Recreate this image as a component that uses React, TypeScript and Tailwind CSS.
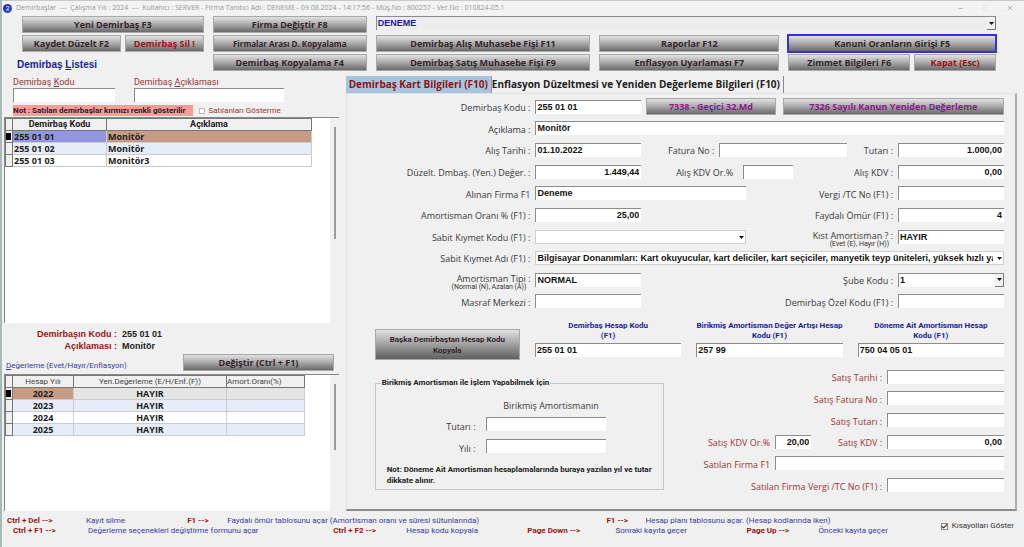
import React from "react"
import { Check, Minus, Square, X } from "lucide-react"
import clsx from "clsx"

const fieldBase =
  "block w-full h-[14px] min-w-0 bg-white border-0 border-t border-l border-[#8c8c8c] rounded-none pl-[1px] pb-[1px] font-['Liberation_Sans',sans-serif] font-bold text-[9px] leading-[12px] text-[#111] outline-none"

type FieldProps = {
  id: string
  value?: string
  right?: boolean
  label?: string
  className?: string
}

const Field: React.FC<FieldProps> = ({ id, value = "", right, label, className }) => (
  <input
    id={id}
    type="text"
    defaultValue={value}
    aria-label={label}
    className={clsx(fieldBase, "pr-[2px]", right && "text-right", className)}
  />
)

const Arrow: React.FC<{ boxed?: boolean }> = ({ boxed }) => (
  <span
    className={clsx(
      "pointer-events-none absolute right-0 top-[1px] bottom-0 flex w-[9px] items-center justify-center",
      boxed && "bg-[#f0f0f0] border-r border-b border-[#777]"
    )}
  >
    <svg width="5" height="3" viewBox="0 0 5 3">
      <path d="M0 0h5L2.5 3z" fill="#111" />
    </svg>
  </span>
)

type SelectProps = FieldProps & { flat?: boolean; boxed?: boolean }

const SelectField: React.FC<SelectProps> = ({ id, value = "", label, flat, boxed, className }) => (
  <div className={clsx("relative min-w-0", className)}>
    <select
      id={id}
      aria-label={label}
      defaultValue={value}
      className={clsx(
        fieldBase,
        "appearance-none pr-[10px]",
        flat && "border-r border-b border-[#d0d0d0]!"
      )}
    >
      <option value={value}>{value}</option>
    </select>
    <Arrow boxed={boxed} />
  </div>
)

type LabelProps = { htmlFor: string; children: React.ReactNode; sub?: string; red?: boolean; className?: string }

const Label: React.FC<LabelProps> = ({ htmlFor, children, sub, red, className }) => (
  <label
    htmlFor={htmlFor}
    className={clsx(
      "block text-right font-['Open_Sans',sans-serif] text-[9px] whitespace-nowrap",
      sub ? "pt-[5px] leading-[9px]" : "pt-[3px] leading-[14px]",
      red ? "text-[#9b3535]" : "text-[#3a3a3a]",
      className
    )}
  >
    {children}
    {sub && <span className="block pr-[4px] font-[Roboto,sans-serif] text-[7px] leading-[8px] text-[#333]">{sub}</span>}
  </label>
)

type ButtonProps = { children: React.ReactNode; className?: string }

const Button: React.FC<ButtonProps> = ({ children, className }) => (
  <button
    type="button"
    className={clsx(
      "h-[17px] min-w-0 border border-[#a8a8a8] bg-linear-to-b from-[#e2e2e2] via-[#a9a9a9] to-[#6a6a6a] px-[2px] font-['Open_Sans',sans-serif] leading-[12px] font-bold whitespace-nowrap",
      className || "text-[#33262b] text-[9px]"
    )}
  >
    {children}
  </button>
)

const FormRow: React.FC<{ children: React.ReactNode }> = ({ children }) => (
  <div className="grid grid-cols-[184fr_106fr_247fr_106fr] items-center gap-x-[5px]">{children}</div>
)

const Scrollbar: React.FC<{ className: string }> = ({ className }) => (
  <div className="w-[9px] bg-[#f0f0f0] pl-[4px] pt-[9px]">
    <div className={clsx("w-[2px] bg-[#9a9a9a]", className)} />
  </div>
)

const Marker: React.FC<{ active?: boolean }> = ({ active }) => (
  <td className="border border-[#777] bg-[#f0f0f0] p-0">
    {active && <div className="h-[7px] w-[5px] bg-black" />}
  </td>
)

const assets = [
  { code: "255 01 01", name: "Monitör" },
  { code: "255 01 02", name: "Monitör" },
  { code: "255 01 03", name: "Monitör3" },
]

const years = ["2022", "2023", "2024", "2025"]

const accounts = [
  { id: "hesap", title: "Demirbaş Hesap Kodu", end: "(F1)", value: "255 01 01" },
  { id: "artis", title: "Birikmiş Amortisman Değer Artışı Hesap", end: "Kodu (F1)", value: "257 99" },
  { id: "donem", title: "Döneme Ait Amortisman Hesap", end: "Kodu (F1)", value: "750 04 05 01" },
]

const TitleBar: React.FC = () => (
  <header className="flex h-[15px] items-center border-t border-[#c3cbcb] bg-[#f3f3f3] pl-[1px] pr-[10px] text-[#999]">
    <svg width="9" height="9" viewBox="0 0 18 18">
      <defs>
        <linearGradient id="logo" x1="0" y1="0" x2="1" y2="1">
          <stop offset="0" stopColor="#1a2a80" />
          <stop offset="1" stopColor="#3050f0" />
        </linearGradient>
      </defs>
      <circle cx="9" cy="9" r="9" fill="url(#logo)" />
      <path d="M6 6.500c2-3 7-2 5.500 1L7 12h5" fill="none" stroke="#dfe6ff" strokeWidth="2" />
    </svg>
    <h1 className="ml-[4px] flex-1 font-['Open_Sans',sans-serif] text-[7px] whitespace-pre">
      Demirbaşlar  ---  Çalışma Yılı : 2024  ---  Kullanıcı : SERVER - Firma Tanıtıcı Adı : DENEME - 09.08.2024 - 14:17:56 - Müş.No : 800257 - Ver.No : 010824-05.1
    </h1>
    <div className="flex gap-[18px]">
      <button type="button" aria-label="Simge durumuna küçült"><Minus size={7} /></button>
      <button type="button" aria-label="Ekranı kapla" className="text-[#ddd]"><Square size={6} /></button>
      <button type="button" aria-label="Pencereyi kapat"><X size={8} /></button>
    </div>
  </header>
)

const Toolbar: React.FC = () => (
  <div className="grid grid-cols-[182fr_154fr_215fr_180fr_208fr] gap-x-[9px] gap-y-[2px] pl-[20px] pr-[28px] pt-[1px]">
    <Button>Yeni Demirbaş F3</Button>
    <Button>Firma Değiştir F8</Button>
    <div className="relative col-span-3">
      <select
        aria-label="Firma"
        defaultValue="DENEME"
        className="block h-[14px] w-full appearance-none border-t border-l border-[#8c8c8c] bg-[#ededed] pb-[1px] pl-[1px] font-['Liberation_Sans',sans-serif] text-[9px] leading-[12px] font-bold text-[#1c1c96]"
      >
        <option>DENEME</option>
      </select>
      <span className="pointer-events-none absolute right-0 top-0 h-[14px] w-[9px]">
        <Arrow boxed />
      </span>
    </div>

    <div className="grid grid-cols-[99fr_79fr] gap-x-[4px]">
      <Button>Kaydet Düzelt F2</Button>
      <Button className="text-[#9b1414] text-[9px]">Demirbaş Sil !</Button>
    </div>
    <Button className="text-[#33262b] text-[8px]">Firmalar Arası D. Kopyalama</Button>
    <Button>Demirbaş Alış Muhasebe Fişi F11</Button>
    <Button>Raporlar F12</Button>
    <Button className="text-[#33262b] text-[9px] outline-2 -outline-offset-1 outline-[#3a2fe0]">Kanuni Oranların Girişi F5</Button>

    <h2 className="-ml-[5px] self-center pt-[4px] font-['Liberation_Sans',sans-serif] text-[10px] leading-[12px] font-bold text-[#1c1c96]">
      Demirbaş <u>L</u>istesi
    </h2>
    <Button>Demirbaş Kopyalama F4</Button>
    <Button>Demirbaş Satış Muhasebe Fişi F9</Button>
    <Button>Enflasyon Uyarlaması F7</Button>
    <div className="grid grid-cols-[122fr_82fr] gap-x-[4px]">
      <Button>Zimmet Bilgileri F6</Button>
      <Button className="text-[#9b1414] text-[9px]">Kapat (Esc)</Button>
    </div>
  </div>
)

const ListPanel: React.FC = () => (
  <section className="flex flex-col">
    <div className="grid grid-cols-[102fr_150fr_36fr] gap-x-[19px] pl-[9px] text-[9px] leading-[12px] text-[#9b3535]">
      <div>
        <label htmlFor="araKod" className="block">Demirbaş <u>K</u>odu</label>
        <Field id="araKod" />
      </div>
      <div>
        <label htmlFor="araAciklama" className="block">Demirbaş <u>A</u>çıklaması</label>
        <Field id="araAciklama" />
      </div>
    </div>
    <div className="mt-[3px] mb-[1px] flex items-center gap-[6px] pl-[9px] text-[8px] leading-[11px] whitespace-nowrap">
      <p className="bg-[#ff9a9a] pr-[8px] font-bold text-[#222]">Not : Satılan demirbaşlar kırmızı renkli gösterilir</p>
      <label className="flex items-center gap-[3px] text-[#9b3535]">
        <input type="checkbox" className="size-[6px] appearance-none border border-[#bbb] bg-white" />
        Satılanları Gösterme
      </label>
    </div>

    <div className="flex min-h-[205px] flex-[205] border-t border-l border-[#888] bg-white">
      <div className="flex-1">
        <table className="w-[307px] table-fixed border-collapse text-[9px] leading-[11px] font-bold text-[#222]">
          <colgroup>
            <col className="w-[7px]" />
            <col className="w-[94px]" />
            <col />
          </colgroup>
          <thead>
            <tr className="h-[12px] bg-[#f0f0f0]">
              <th className="border border-[#777] p-0" />
              <th className="border border-[#777] p-0">Demirbaş Kodu</th>
              <th className="border border-[#777] p-0">Açıklama</th>
            </tr>
          </thead>
          <tbody className="font-['Open_Sans',sans-serif]">
            {assets.map((asset, i) => (
              <tr key={asset.code} className={clsx("h-[12px]", i === 1 && "bg-[#e6edf8]")}>
                <Marker active={i === 0} />
                <td className={clsx("border border-[#ccc] p-0 pl-[1px]", i === 0 && "bg-[#9297e2]")}>{asset.code}</td>
                <td className={clsx("border border-[#ccc] p-0 pl-[1px]", i === 0 && "bg-[#c69c84]")}>{asset.name}</td>
              </tr>
            ))}
          </tbody>
        </table>
      </div>
      <Scrollbar className="h-[112px]" />
    </div>

    <dl className="grid grid-cols-[113px_1fr] gap-x-[5px] pt-[5px] font-['Liberation_Sans',sans-serif] text-[9px] leading-[12px] font-bold text-[#222]">
      <dt className="text-right text-[#9b1414]">Demirbaşın Kodu :</dt>
      <dd>255 01 01</dd>
      <dt className="text-right text-[#9b1414]">Açıklaması :</dt>
      <dd>Monitör</dd>
    </dl>
    <div className="mt-[2px] mb-[3px] grid grid-cols-[171fr_151fr] gap-x-[7px] pl-[2px] pr-[5px]">
      <h3 className="self-end text-[8px] leading-[11px] text-[#3a3a9e]"><u>D</u>eğerleme (Evet/Hayır/Enflasyon)</h3>
      <Button>Değiştir (Ctrl + F1)</Button>
    </div>

    <div className="flex min-h-[136px] flex-[136] border-t border-l border-[#888] bg-white">
      <div className="flex-1">
        <table className="w-[300px] table-fixed border-collapse text-center text-[9px] leading-[11px] font-bold text-[#222]">
          <colgroup>
            <col className="w-[7px]" />
            <col className="w-[61px]" />
            <col className="w-[153px]" />
            <col />
          </colgroup>
          <thead>
            <tr className="h-[12px] bg-[#f0f0f0] text-[8px] text-[#444]">
              <th className="border border-[#777] p-0" />
              <th className="border border-[#777] p-0 font-normal">Hesap Yılı</th>
              <th className="border border-[#777] p-0 font-normal">Yen.Değerleme (E/H/Enf.(F))</th>
              <th className="border border-[#777] p-0 text-left font-normal">Amort.Oranı(%)</th>
            </tr>
          </thead>
          <tbody className="font-['Open_Sans',sans-serif]">
            {years.map((year, i) => (
              <tr key={year} className={clsx("h-[12px]", i === 0 && "bg-[#e5e5e5]", i % 2 === 1 && "bg-[#e6edf8]")}>
                <Marker active={i === 0} />
                <td className={clsx("border border-[#ccc] p-0", i === 0 && "bg-[#c69c84]")}>{year}</td>
                <td className="border border-[#ccc] p-0">HAYIR</td>
                <td className="border border-[#ccc] p-0" />
              </tr>
            ))}
          </tbody>
        </table>
      </div>
      <Scrollbar className="h-[66px]" />
    </div>
  </section>
)

const AssetForm: React.FC = () => (
  <div className="grid h-[216px] auto-rows-fr">
    <FormRow>
      <Label htmlFor="kod">Demirbaş Kodu :</Label>
      <Field id="kod" value="255 01 01" />
      <div className="col-span-2 grid grid-cols-[129fr_221fr] gap-x-[7px]">
        <Button className="text-[#8a1a8a] text-[9px]">7338 - Geçici 32.Md</Button>
        <Button className="text-[#8a1a8a] text-[9px]">7326 Sayılı Kanun Yeniden Değerleme</Button>
      </div>
    </FormRow>
    <FormRow>
      <Label htmlFor="aciklama">Açıklama :</Label>
      <Field id="aciklama" value="Monitör" className="col-span-3" />
    </FormRow>
    <FormRow>
      <Label htmlFor="alisTarihi">Alış Tarihi :</Label>
      <Field id="alisTarihi" value="01.10.2022" />
      <div className="grid grid-cols-[68fr_128fr_41fr] items-center gap-x-[5px]">
        <Label htmlFor="faturaNo">Fatura No :</Label>
        <Field id="faturaNo" />
        <Label htmlFor="tutar">Tutarı :</Label>
      </div>
      <Field id="tutar" value="1.000,00" right />
    </FormRow>
    <FormRow>
      <Label htmlFor="deger">Düzelt. Dmbaş. (Yen.) Değer. :</Label>
      <Field id="deger" value="1.449,44" right />
      <div className="grid grid-cols-[87fr_50fr_90fr] items-center gap-x-[10px]">
        <Label htmlFor="kdvOran">Alış KDV Or.%</Label>
        <Field id="kdvOran" />
        <Label htmlFor="alisKdv">Alış KDV :</Label>
      </div>
      <Field id="alisKdv" value="0,00" right />
    </FormRow>
    <FormRow>
      <Label htmlFor="firma">Alınan Firma F1</Label>
      <div className="col-span-2 grid grid-cols-[211fr_142fr] items-center gap-x-[5px]">
        <Field id="firma" value="Deneme" />
        <Label htmlFor="vergi">Vergi /TC No (F1) :</Label>
      </div>
      <Field id="vergi" />
    </FormRow>
    <FormRow>
      <Label htmlFor="oran">Amortisman Oranı % (F1) :</Label>
      <Field id="oran" value="25,00" right />
      <Label htmlFor="omur">Faydalı Ömür (F1) :</Label>
      <Field id="omur" value="4" right />
    </FormRow>
    <FormRow>
      <Label htmlFor="kiymetKodu">Sabit Kıymet Kodu (F1) :</Label>
      <div className="col-span-2 grid grid-cols-[211fr_142fr] items-center gap-x-[5px]">
        <SelectField id="kiymetKodu" flat />
        <Label htmlFor="kist" sub="(Evet (E), Hayır (H))">Kıst Amortisman ? :</Label>
      </div>
      <Field id="kist" value="HAYIR" />
    </FormRow>
    <FormRow>
      <Label htmlFor="kiymetAdi">Sabit Kıymet Adı (F1) :</Label>
      <SelectField
        id="kiymetAdi"
        flat
        value="Bilgisayar Donanımları: Kart okuyucular, kart deliciler, kart seçiciler, manyetik teyp üniteleri, yüksek hızlı yazıcılar"
        className="col-span-3"
      />
    </FormRow>
    <FormRow>
      <Label htmlFor="tip" sub="(Normal (N), Azalan (A))">Amortisman Tipi :</Label>
      <Field id="tip" value="NORMAL" />
      <Label htmlFor="sube">Şube Kodu :</Label>
      <SelectField id="sube" value="1" boxed />
    </FormRow>
    <FormRow>
      <Label htmlFor="masraf">Masraf Merkezi :</Label>
      <Field id="masraf" />
      <Label htmlFor="ozelKod">Demirbaş Özel Kodu (F1) :</Label>
      <Field id="ozelKod" />
    </FormRow>
  </div>
)

const SalesForm: React.FC = () => {
  const row = "grid grid-cols-[106fr_36fr_66fr_117fr] items-center gap-x-[5px]"
  return (
    <div className="grid h-[130px] auto-rows-fr">
      <div className={row}>
        <Label red htmlFor="satisTarihi" className="col-span-3">Satış Tarihi :</Label>
        <Field id="satisTarihi" />
      </div>
      <div className={row}>
        <Label red htmlFor="satisFatura" className="col-span-3">Satış Fatura No :</Label>
        <Field id="satisFatura" />
      </div>
      <div className={row}>
        <Label red htmlFor="satisTutar" className="col-span-3">Satış Tutarı :</Label>
        <Field id="satisTutar" />
      </div>
      <div className={row}>
        <Label red htmlFor="satisOran">Satış KDV Or.%</Label>
        <Field id="satisOran" value="20,00" right />
        <Label red htmlFor="satisKdv">Satış KDV :</Label>
        <Field id="satisKdv" value="0,00" right />
      </div>
      <div className={row}>
        <Label red htmlFor="satilanFirma">Satılan Firma F1</Label>
        <Field id="satilanFirma" className="col-span-3" />
      </div>
      <div className={row}>
        <Label red htmlFor="satilanVergi" className="col-span-3">Satılan Firma Vergi /TC No (F1) :</Label>
        <Field id="satilanVergi" />
      </div>
    </div>
  )
}

const CardPanel: React.FC = () => (
  <section className="flex flex-col">
    <div role="tablist" className="flex h-[17px] items-stretch font-['Open_Sans',sans-serif] text-[10px] leading-[15px] font-bold whitespace-nowrap">
      <button type="button" role="tab" aria-selected="true" className="border-r border-[#999] bg-[#abc4de] px-[3px] text-[#8c1616]">
        Demirbaş Kart Bilgileri (F10)
      </button>
      <button type="button" role="tab" aria-selected="false" className="border-r border-[#888] pr-[3px] text-[#222]">
        Enflasyon Düzeltmesi ve Yeniden Değerleme Bilgileri (F10)
      </button>
    </div>
    <div className="flex-1 border-t border-l border-r-2 border-b-2 border-t-[#e2e2e2] border-l-[#e2e2e2] border-r-[#adadad] border-b-[#8c8c8c] pt-[2px] pr-[11px] pb-[13px]">
      <AssetForm />

      <div className="mt-[9px] grid grid-cols-[145fr_146fr_146fr_146fr] items-end gap-x-[15px] pl-[28px]">
        <button
          type="button"
          className="-mb-[3px] h-[31px] min-w-0 border border-[#a8a8a8] bg-linear-to-b from-[#e2e2e2] via-[#a0a0a0] to-[#606060] px-[10px] text-[8px] leading-[11px] font-bold text-[#33262b]"
        >
          Başka Demirbaştan Hesap Kodu Kopyala
        </button>
        {accounts.map((account) => (
          <div key={account.id} className="min-w-0">
            <label htmlFor={account.id} className="mb-[2px] flex flex-col items-center text-[8px] leading-[10px] font-bold whitespace-nowrap text-[#1c1c96]">
              <span>{account.title}</span>
              <span>{account.end}</span>
            </label>
            <Field id={account.id} value={account.value} />
          </div>
        ))}
      </div>

      <div className="mt-[9px] grid grid-cols-[290fr_340fr] pl-[28px]">
        <fieldset className="mt-[12px] mb-[6px] min-w-0 border border-[#c8c8c8] px-[5px]">
          <legend className="px-[1px] text-[8px] leading-[10px] font-bold text-[#222]">Birikmiş Amortisman ile İşlem Yapabilmek İçin</legend>
          <div className="grid grid-cols-[95fr_121fr_42fr] gap-x-[10px] gap-y-[8px]">
            <p className="col-start-2 mt-[11px] -mb-[4px] pl-[10px] text-center font-['Open_Sans',sans-serif] text-[9px] leading-[14px] whitespace-nowrap text-[#3a3a3a]">Birikmiş Amortismanın</p>
            <Label htmlFor="birikmisTutar" className="col-start-1 -mb-[3px]">Tutarı :</Label>
            <Field id="birikmisTutar" />
            <Label htmlFor="birikmisYil" className="col-start-1">Yılı :</Label>
            <Field id="birikmisYil" />
          </div>
          <p className="mt-[8px] px-[6px] text-[8px] leading-[11px] font-bold text-[#222]">
            Not: Döneme Ait Amortisman hesaplamalarında buraya yazılan yıl ve tutar dikkate alınır.
          </p>
        </fieldset>
        <SalesForm />
      </div>
    </div>
  </section>
)

const Key: React.FC<{ children: React.ReactNode }> = ({ children }) => <dt className="font-bold text-[#9b1414]">{children}</dt>

const Shortcuts: React.FC = () => (
  <footer className="flex items-center pt-[5px] pr-[10px] text-[8px] leading-[10px] whitespace-nowrap text-[#3a3a9e]">
    <div className="min-w-0 flex-1">
      <dl className="grid grid-cols-[79fr_101fr_40fr_379fr_39fr_295fr] pl-[5px]">
        <Key>Ctrl + Del --&gt;</Key>
        <dd>Kayıt silme</dd>
        <Key>F1 --&gt;</Key>
        <dd>Faydalı ömür tablosunu açar (Amortisman oranı ve süresi sütunlarında)</dd>
        <Key>F1 --&gt;</Key>
        <dd>Hesap planı tablosunu açar. (Hesap kodlarında iken)</dd>
      </dl>
      <dl className="grid grid-cols-[75fr_245fr_73fr_121fr_88fr_131fr_72fr_122fr] pl-[11px]">
        <Key>Ctrl + F1 --&gt;</Key>
        <dd>Değerleme seçenekleri değiştirme formunu açar</dd>
        <Key>Ctrl + F2 --&gt;</Key>
        <dd>Hesap kodu kopyala</dd>
        <Key>Page Down --&gt;</Key>
        <dd>Sonraki kayıta geçer</dd>
        <Key>Page Up --&gt;</Key>
        <dd>Önceki kayıta geçer</dd>
      </dl>
    </div>
    <label className="flex items-center gap-[4px] text-[#333]">
      <span className="relative flex size-[7px]">
        <input type="checkbox" defaultChecked className="size-[7px] appearance-none border border-[#888] bg-white" />
        <Check size={7} strokeWidth={4} className="pointer-events-none absolute inset-0" />
      </span>
      Kısayolları Göster
    </label>
  </footer>
)

const App: React.FC = () => {
  return (
    <div className="flex min-h-screen flex-col border-l-2 border-[#a9b8b8] bg-[#f0f0f0] font-[Roboto,'Open_Sans',sans-serif]">
      <TitleBar />
      <Toolbar />
      <main className="mt-[5px] grid flex-1 grid-cols-[335fr_672fr] gap-x-[7px] pl-[2px] pr-[7px]">
        <ListPanel />
        <CardPanel />
      </main>
      <div className="pb-[11px]">
        <Shortcuts />
      </div>
    </div>
  )
}

export default App
